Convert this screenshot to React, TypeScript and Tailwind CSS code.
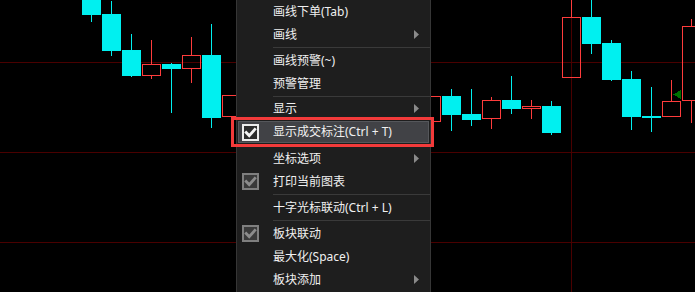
import React from "react";

type Candle = { l: number; t: number; b: number; wt: number; wb: number; red?: boolean };

const candles: Candle[] = [
  { l: 82, t: -5, b: 15, wt: -5, wb: 22 },
  { l: 102, t: 14, b: 51, wt: 1, wb: 56 },
  { l: 122, t: 50, b: 76, wt: 34, wb: 77 },
  { l: 142, t: 64, b: 76, wt: 40, wb: 79, red: true },
  { l: 162, t: 64, b: 69, wt: 63, wb: 113 },
  { l: 182, t: 55, b: 69, wt: 37, wb: 83, red: true },
  { l: 202, t: 55, b: 118, wt: 24, wb: 128 },
  { l: 222, t: 95, b: 117, wt: 95, wb: 117, red: true },
  { l: 422, t: 96, b: 122, wt: 96, wb: 122, red: true },
  { l: 442, t: 96, b: 115, wt: 89, wb: 131 },
  { l: 462, t: 114, b: 120, wt: 89, wb: 126 },
  { l: 482, t: 100, b: 119, wt: 97, wb: 129, red: true },
  { l: 502, t: 100, b: 109, wt: 76, wb: 114 },
  { l: 522, t: 106, b: 109, wt: 100, wb: 119, red: true },
  { l: 542, t: 106, b: 133, wt: 101, wb: 135 },
  { l: 562, t: 17, b: 78, wt: -2, wb: 78, red: true },
  { l: 582, t: 17, b: 44, wt: -2, wb: 54 },
  { l: 602, t: 43, b: 80, wt: 40, wb: 81 },
  { l: 622, t: 79, b: 117, wt: 71, wb: 130 },
  { l: 642, t: 116, b: 118, wt: 87, wb: 132 },
  { l: 662, t: 101, b: 117, wt: 80, wb: 117, red: true },
  { l: 682, t: 26, b: 101, wt: 19, wb: 123, red: true },
];

const RED = "#ff3c3c";
const CYAN = "#00f0f0";

function Chart() {
  return (
    <svg width={695} height={292} className="absolute left-0 top-0" shapeRendering="crispEdges">
      <rect x={0} y={0} width={695} height={292} fill="#000" />
      {[62, 152, 242].map((y) => (
        <line key={y} x1={0} x2={695} y1={y + 0.5} y2={y + 0.5} stroke="#4a0000" strokeWidth={1} />
      ))}
      <line x1={571.5} x2={571.5} y1={0} y2={292} stroke="#4a0000" strokeWidth={1} />
      {candles.map((c, i) => {
        const cx = c.l + 9.5;
        if (c.red) {
          return (
            <g key={i}>
              {c.wt < c.t && <line x1={cx} x2={cx} y1={c.wt} y2={c.t} stroke={RED} strokeWidth={1} />}
              {c.wb > c.b && <line x1={cx} x2={cx} y1={c.b} y2={c.wb} stroke={RED} strokeWidth={1} />}
              <rect x={c.l + 0.5} y={c.t + 0.5} width={18} height={c.b - c.t - 1} fill="none" stroke={RED} strokeWidth={1} />
            </g>
          );
        }
        return (
          <g key={i}>
            <line x1={cx} x2={cx} y1={c.wt} y2={c.wb} stroke={CYAN} strokeWidth={1} />
            <rect x={c.l} y={c.t} width={19} height={c.b - c.t} fill={CYAN} />
          </g>
        );
      })}
      <polygon points="673,94.5 681,90 681,99" fill="#007000" />
    </svg>
  );
}

function Check({ disabled }: { disabled?: boolean }) {
  const border = disabled ? "#7f7f7f" : "#ececec";
  const fill = disabled ? "#3a3a3a" : "#2c2c2c";
  const mark = disabled ? "#8c8c8c" : "#f4f4f4";
  return (
    <svg width={17} height={17} viewBox="0 0 17 17">
      <rect x={1} y={1} width={15} height={15} fill={fill} stroke={border} strokeWidth={2} />
      <path d="M4.2 8.6 L7.2 11.6 L12.8 5.4" fill="none" stroke={mark} strokeWidth={2.8} strokeLinecap="square" />
    </svg>
  );
}

function Arrow() {
  return (
    <svg width={5} height={9} viewBox="0 0 5 9">
      <polygon points="0,0 5,4.5 0,9" fill="#8a8a8a" />
    </svg>
  );
}

function Item({
  label,
  arrow,
  check,
}: {
  label: string;
  arrow?: boolean;
  check?: "on" | "off";
}) {
  return (
    <div className="flex h-[23px] items-center">
      <div className="flex w-[36px] items-center pl-[5px]">
        {check && <Check disabled={check === "off"} />}
      </div>
      <span className="flex-1 whitespace-nowrap leading-none">{label}</span>
      <div className="flex w-[16px] items-center">{arrow && <Arrow />}</div>
    </div>
  );
}

function Sep({ h = 3 }: { h?: number }) {
  return (
    <div className={`flex items-center ${h === 3 ? "h-[3px]" : "h-[2px]"}`}>
      <div className="ml-[36px] h-[1px] flex-1 bg-[#3a3a3a]" />
    </div>
  );
}

export default function App() {
  return (
    <div
      className="relative h-[292px] w-[695px] overflow-hidden bg-black"
      style={{ fontFamily: '"Noto Sans", "Noto Sans CJK SC", sans-serif' }}
    >
      <Chart />
      <div className="absolute left-[236px] top-0 flex h-[300px] w-[195px] flex-col border-x border-[#363636] bg-[#1e1e1e] text-[12px] text-[#f0f0f0]">
        <Item label="画线下单(Tab)" />
        <Item label="画线" arrow />
        <Sep />
        <Item label="画线预警(~)" />
        <Item label="预警管理" />
        <Sep h={2} />
        <Item label="显示" arrow />
        <div className="h-[27px] px-[1px] pb-[4px] pt-[1px]">
          <div className="flex h-[22px] items-center border border-[#55575b] bg-[#414246]">
            <div className="flex w-[34px] items-center pl-[3px]">
              <Check />
            </div>
            <span className="whitespace-nowrap leading-none">显示成交标注(Ctrl + T)</span>
          </div>
        </div>
        <Item label="坐标选项" arrow />
        <Item label="打印当前图表" check="off" />
        <Sep />
        <Item label="十字光标联动(Ctrl + L)" />
        <Sep />
        <Item label="板块联动" check="off" />
        <Item label="最大化(Space)" />
        <Item label="板块添加" arrow />
      </div>
      <div className="absolute left-[231px] top-[117px] h-[30px] w-[203px] border-[3px] border-[#f23a3a]" />
    </div>
  );
}
